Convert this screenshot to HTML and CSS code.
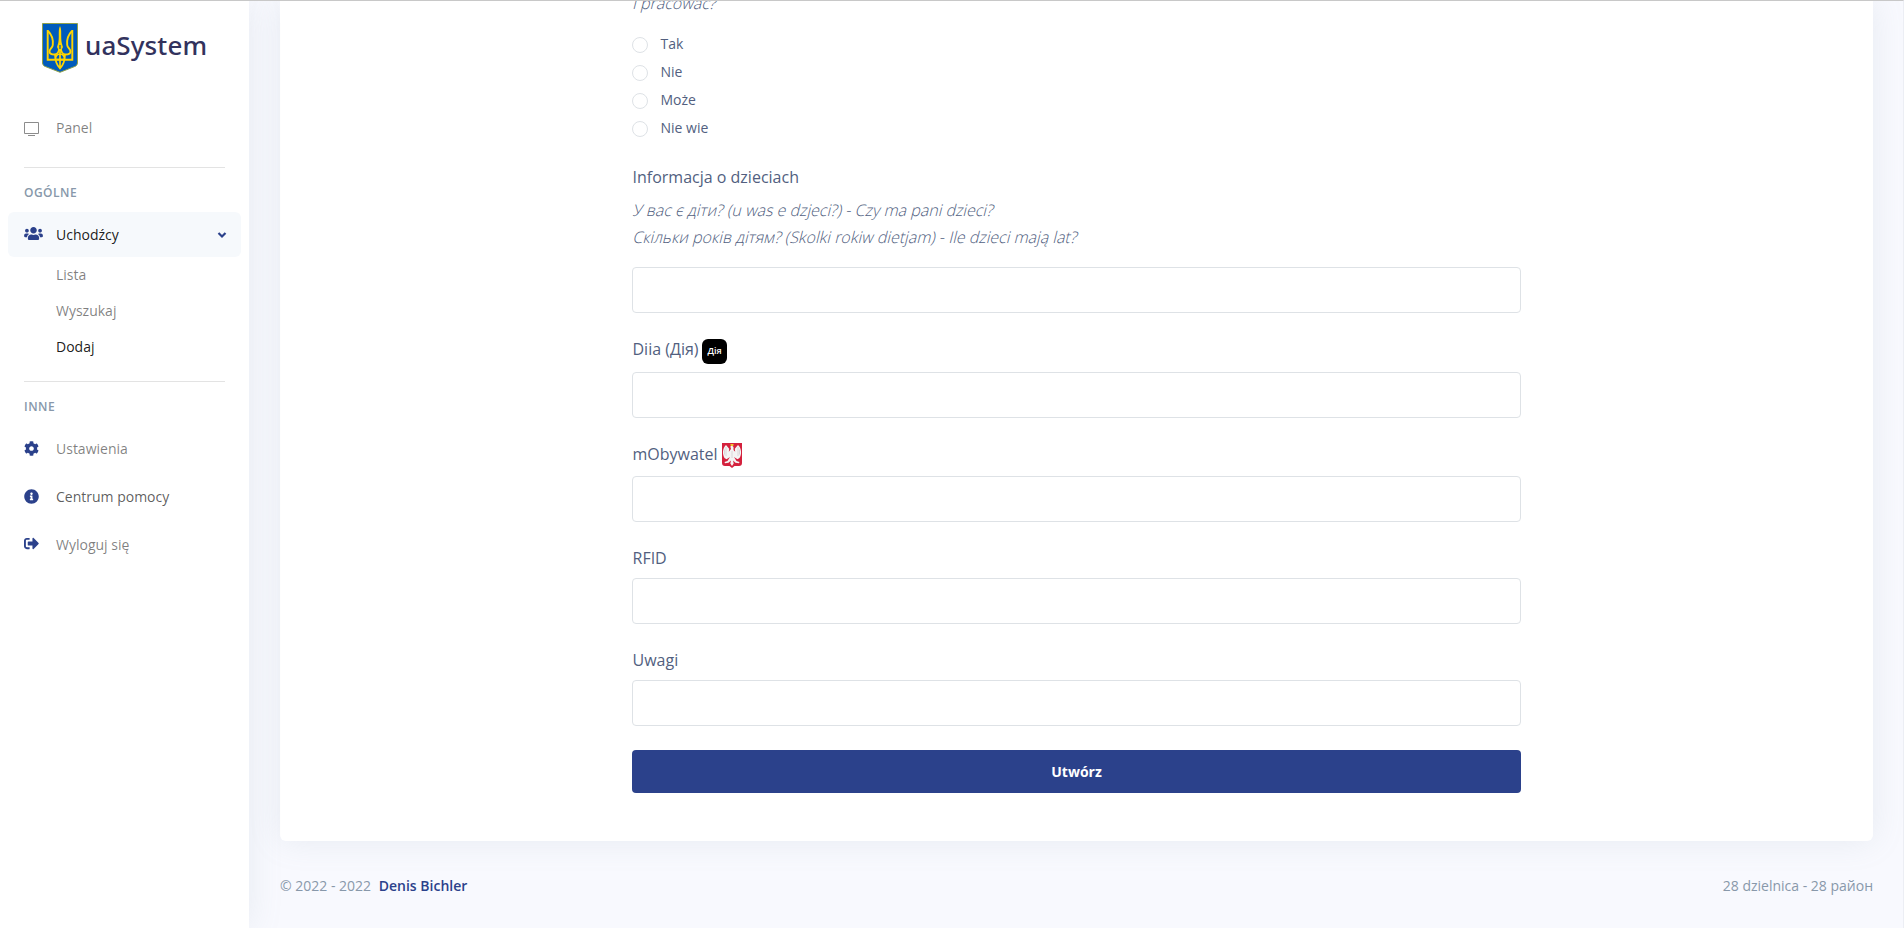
FILE: index.html
```
<!DOCTYPE html>
<html lang="pl">
<head>
<meta charset="utf-8">
<title>uaSystem</title>
<link rel="stylesheet" href="styles.css">
</head>
<body>
<div class="app">
  <nav class="sidebar">
    <a class="brand">
      <svg class="brand-crest" viewBox="0 0 36 50">
        <path d="M.5.5h35v39.5q0 2-2 3.2L18 49.3 2.500 43.200Q.5 42 .5 40z" fill="#005bbb" stroke="#8fa04a"/>
        <g fill="none" stroke="#ffd500" stroke-width="1.900">
          <path d="M5.700 7v29.800h24.600V7"/>
          <path d="M6 8c4 4 5.500 8 4.800 14-.3 3-3.300 4-3.300 6.500 0 2 2.500 3 5 3 3 0 4.500-3 5-7M30 8c-4 4-5.500 8-4.800 14 .3 3 3.300 4 3.300 6.500 0 2-2.500 3-5 3-3 0-4.500-3-5-7"/>
          <path d="M18 29v17M13 31.500c0 6 1.800 10.500 5 14 3.200-3.500 5-8 5-14M18 31c-3.500 0-4.500 2-4.500 5.500h9c0-3.500-1-5.500-4.500-5.500z" stroke-width="1.700"/>
        </g>
        <path d="M18 3c1.500 3 1.200 6 1.200 10 0 6 .8 8 1.800 11l-3 6-3-6c1-3 1.800-5 1.800-11 0-4-.3-7 1.200-10z" fill="#ffd500"/>
        <path d="M18 22v4" stroke="#005bbb" stroke-width="1.300"/>
      </svg>
      <span class="brand-name">uaSystem</span>
    </a>
    <a class="nav-link nav-panel">
      <svg class="icon icon-muted" viewBox="0 0 15 15"><path d="M.5 1.500h14v11h-14zM4 14.500h7" fill="none" stroke="currentColor"/></svg>
      <span>Panel</span>
    </a>
    <hr class="divider">
    <h6 class="nav-heading">OGÓLNE</h6>
    <a class="nav-link nav-active">
      <svg class="icon icon-wide" viewBox="0 0 640 512"><path fill="currentColor" d="M96 224c35.300 0 64-28.700 64-64s-28.700-64-64-64-64 28.700-64 64 28.700 64 64 64zm448 0c35.300 0 64-28.700 64-64s-28.700-64-64-64-64 28.700-64 64 28.700 64 64 64zm32 32h-64c-17.600 0-33.500 7.100-45.100 18.600 40.300 22.100 68.900 62 75.100 109.400h66c17.700 0 32-14.300 32-32v-32c0-35.300-28.700-64-64-64zm-256 0c61.900 0 112-50.100 112-112S381.900 32 320 32 208 82.100 208 144s50.100 112 112 112zm76.800 32h-8.300c-20.800 10-43.900 16-68.500 16s-47.600-6-68.500-16h-8.300C179.600 288 128 339.600 128 403.200V432c0 26.500 21.500 48 48 48h288c26.500 0 48-21.500 48-48v-28.800c0-63.600-51.600-115.200-115.200-115.200zm-223.700-13.400C161.500 263.100 145.600 256 128 256H64c-35.300 0-64 28.700-64 64v32c0 17.700 14.300 32 32 32h65.900c6.300-47.400 34.900-87.300 75.200-109.400z"/></svg>
      <span>Uchodźcy</span>
      <svg class="chevron" viewBox="0 0 10 8"><path d="M1.500 2 5 5.500 8.500 2" fill="none" stroke="currentColor" stroke-width="2.200"/></svg>
    </a>
    <div class="subnav">
      <a class="subnav-link">Lista</a>
      <a class="subnav-link">Wyszukaj</a>
      <a class="subnav-link subnav-current">Dodaj</a>
    </div>
    <hr class="divider divider-sub">
    <h6 class="nav-heading">INNE</h6>
    <a class="nav-link nav-item">
      <svg class="icon" viewBox="0 0 512 512"><path fill="currentColor" d="M487.400 315.700l-42.600-24.600c4.300-23.200 4.300-47 0-70.200l42.600-24.600c4.900-2.800 7.100-8.600 5.500-14-11.100-35.600-30-67.800-54.700-94.600-3.800-4.100-10-5.100-14.800-2.300L380.800 110c-17.900-15.400-38.500-27.300-60.800-35.100V25.800c0-5.600-3.900-10.500-9.400-11.700-36.700-8.200-74.300-7.800-109.200 0-5.500 1.200-9.400 6.100-9.400 11.700V75c-22.200 7.900-42.800 19.800-60.800 35.100L88.700 85.500c-4.900-2.800-11-1.900-14.800 2.300-24.700 26.700-43.600 58.900-54.700 94.600-1.700 5.400.6 11.200 5.500 14L67.300 221c-4.300 23.200-4.300 47 0 70.200l-42.600 24.600c-4.900 2.800-7.100 8.600-5.500 14 11.100 35.600 30 67.800 54.700 94.600 3.800 4.100 10 5.100 14.800 2.300l42.600-24.600c17.900 15.400 38.500 27.300 60.800 35.100v49.200c0 5.600 3.900 10.500 9.400 11.700 36.700 8.200 74.300 7.800 109.200 0 5.500-1.200 9.400-6.100 9.400-11.700v-49.200c22.200-7.900 42.800-19.800 60.800-35.100l42.600 24.600c4.900 2.800 11 1.900 14.800-2.300 24.700-26.700 43.600-58.900 54.700-94.600 1.500-5.500-.7-11.300-5.600-14.100zM256 336c-44.100 0-80-35.900-80-80s35.900-80 80-80 80 35.900 80 80-35.900 80-80 80z"/></svg>
      <span>Ustawienia</span>
    </a>
    <a class="nav-link nav-item nav-dark">
      <svg class="icon" viewBox="0 0 512 512"><path fill="currentColor" d="M256 8C119 8 8 119.100 8 256c0 137 111 248 248 248s248-111 248-248C504 119.100 393 8 256 8zm0 110c23.200 0 42 18.800 42 42s-18.800 42-42 42-42-18.800-42-42 18.800-42 42-42zm56 254c0 6.600-5.400 12-12 12h-88c-6.600 0-12-5.400-12-12v-24c0-6.600 5.400-12 12-12h12v-64h-12c-6.600 0-12-5.400-12-12v-24c0-6.600 5.400-12 12-12h64c6.600 0 12 5.400 12 12v100h12c6.600 0 12 5.400 12 12v24z"/></svg>
      <span>Centrum pomocy</span>
    </a>
    <a class="nav-link nav-item">
      <svg class="icon icon-logout" viewBox="0 0 512 512"><path fill="currentColor" d="M497 273L329 441c-15 15-41 4.500-41-17v-96H152c-13.300 0-24-10.700-24-24v-96c0-13.300 10.700-24 24-24h136V88c0-21.400 25.900-32 41-17l168 168c9.300 9.400 9.300 24.600 0 34zM192 436v-40c0-6.600-5.400-12-12-12H96c-17.700 0-32-14.300-32-32V160c0-17.700 14.300-32 32-32h84c6.600 0 12-5.400 12-12V76c0-6.600-5.400-12-12-12H96c-53 0-96 43-96 96v192c0 53 43 96 96 96h84c6.600 0 12-5.400 12-12z"/></svg>
      <span>Wyloguj się</span>
    </a>
  </nav>
  <main class="main">
    <section class="card">
      <form class="form">
        <p class="hint hint-first"><span>i pracować?</span></p>
        <div class="radios">
          <label class="radio"><span class="dot"></span>Tak</label>
          <label class="radio"><span class="dot"></span>Nie</label>
          <label class="radio"><span class="dot"></span>Może</label>
          <label class="radio"><span class="dot"></span>Nie wie</label>
        </div>
        <div class="label label-children">Informacja o dzieciach</div>
        <p class="hint hint-children"><span>У вас є діти? (u was e dzjeci?) - Czy ma pani dzieci?</span><span>Скільки років дітям? (Skolki rokiw dietjam) - Ile dzieci mają lat?</span></p>
        <div class="field"></div>
        <div class="label label-diia">Diia (Дія)
          <svg class="badge-diia" viewBox="0 0 25 25"><rect width="25" height="25" rx="6"/><text x="12.500" y="15" text-anchor="middle">Дія</text></svg>
        </div>
        <div class="field"></div>
        <div class="label label-mob">mObywatel
          <svg class="badge-eagle" viewBox="0 0 20 25">
            <path d="M0 0h20v20q0 3-3 3h-4.500L10 25 7.500 23H3q-3 0-3-3z" fill="#d4213d"/>
            <path d="M4 2C.5 5 0 11 2.500 15l2 1.200L8 14l-2.500 4-3 1 .5 1.200 3.500-.4L9 17.500l-.7 3L10 23l1.700-2.500-.7-3 2.500 2.300 3.500.4.500-1.200-3-1L12 14l3.500 2.200 2-1.200C20 11 19.500 5 16 2l-3.200 3.800.4 3L11.500 7V4L10 2.500 8.300 3.500 9 6 6.800 8.800l.4-3z" fill="#f4f4f4"/>
            <path d="M4 4v9M2.500 6.500v5M16 4v9M17.500 6.500v5M10 8v7" stroke="#c9c4c8" stroke-width=".6"/>
            <path d="M8.300 1h3.400l-.5 2H8.800z" fill="#f2c230"/>
          </svg>
        </div>
        <div class="field"></div>
        <div class="label label-plain">RFID</div>
        <div class="field"></div>
        <div class="label label-plain">Uwagi</div>
        <div class="field"></div>
        <button class="submit" type="button">Utwórz</button>
      </form>
    </section>
    <footer class="footer">
      <div>© 2022 - 2022 <a class="author">Denis Bichler</a></div>
      <div>28 dzielnica - 28 район</div>
    </footer>
  </main>
</div>
</body>
</html>
```
FILE: styles.css
```
* { box-sizing: border-box; }
body {
  margin: 0;
  font-family: "Open Sans", sans-serif;
  font-size: 16px;
  line-height: 1.5;
  color: #525f7f;
  background: #f8f9fe;
}
.app {
  display: flex;
  height: 928px;
  overflow: hidden;
  border-top: 1px solid #c8c8c8;
  border-right: 1px solid #eceef4;
}
.sidebar {
  position: relative;
  z-index: 1;
  flex: 0 0 249px;
  background: #fff;
  box-shadow: 0 0 32px 0 rgba(136, 152, 170, .15);
  font-size: 14px;
}
.brand { display: flex; height: 98px; padding: 22px 0 0 42px; }
.brand-crest { width: 36px; height: 50px; }
.brand-name {
  margin-left: 7px;
  font: 500 26px/44px "Noto Sans", sans-serif;
  letter-spacing: .1px;
  color: #32325d;
}
.nav-link {
  display: flex;
  align-items: center;
  padding-left: 24px;
  color: rgba(0, 0, 0, .5);
}
.nav-link span { margin-left: 17px; }
.nav-panel { height: 56px; margin-bottom: 12px; }
.icon { width: 15px; height: 15px; color: #2b418b; }
.icon-muted { color: #8c8c8c; margin-top: 2px; }
.icon-wide { width: 19px; margin-bottom: 2px; }
.icon-logout { margin-bottom: 2px; }
.divider { height: 1px; margin: 0 24px; border: 0; background: #e3e3e3; }
.nav-heading {
  margin: 0;
  padding: 16px 24px 0;
  font-size: 12px;
  font-weight: 600;
  line-height: 18px;
  letter-spacing: .04em;
  color: #8898aa;
}
.nav-active {
  height: 45px;
  margin: 10px 8px 0;
  padding: 0 14px 0 16px;
  border-radius: 6px;
  background: #f6f9fc;
  color: rgba(0, 0, 0, .9);
}
.nav-active span { margin-left: 13px; }
.chevron { width: 10px; height: 8px; margin-left: auto; color: #2b418b; }
.subnav { padding: 0 0 0 56px; color: rgba(0, 0, 0, .5); }
.subnav-link { display: block; height: 36px; line-height: 36px; }
.subnav-current { color: rgba(0, 0, 0, .9); }
.divider-sub { margin-top: 16px; }
.nav-item { height: 48px; }
.nav-heading + .nav-item { margin-top: 8px; }
.nav-dark { color: rgba(0, 0, 0, .65); }
.main { flex: 1; padding: 0 30px 0 31px; }
.card {
  height: 840px;
  padding: 0 352px;
  border-radius: 0 0 6px 6px;
  background: #fff;
  box-shadow: 0 0 32px 0 rgba(136, 152, 170, .15);
}
.form { display: flow-root; }
.hint { margin: 0; font-weight: 300; line-height: 27.2px; }
.hint span {
  display: block;
  width: max-content;
  transform: skewX(-14deg);
  transform-origin: 0 20px;
}
.hint-first { margin-top: -11px; }
.radios { padding-top: 12.800px; }
.radio { display: flex; height: 28px; font-size: 14px; line-height: 28px; }
.dot {
  width: 16px;
  height: 16px;
  margin: 7px 12.500px 0 0;
  border: 1px solid #dee2e6;
  border-radius: 50%;
}
.label { display: flex; gap: 4px; padding-left: .5px; line-height: 24px; }
.label-children { margin-top: 23px; }
.hint-children { margin-top: 7.600px; }
.field { height: 46px; border: 1px solid #dee2e6; border-radius: 4px; background: #fff; }
.hint-children + .field { margin-top: 16px; }
.label-diia { gap: 3px; height: 33px; margin-top: 26px; line-height: 20px; }
.badge-diia { width: 25px; height: 25px; }
.badge-diia text { fill: #fff; font: 600 9px "Open Sans", sans-serif; }
.label-mob { height: 33px; margin-top: 25px; line-height: 22px; }
.badge-eagle { width: 20px; height: 25px; }
.label-plain { height: 32px; margin-top: 24px; }
.submit {
  display: block;
  width: 100%;
  height: 43px;
  margin-top: 24px;
  border: 0;
  border-radius: 4px;
  background: #2b418b;
  color: #fff;
  font: 700 14px/21px "Open Sans", sans-serif;
}
.footer {
  display: flex;
  justify-content: space-between;
  padding-top: 34px;
  font-size: 14px;
  line-height: 21px;
  color: #8898aa;
}
.author { margin-left: 4px; font-weight: 600; color: #2b418b; }
```
